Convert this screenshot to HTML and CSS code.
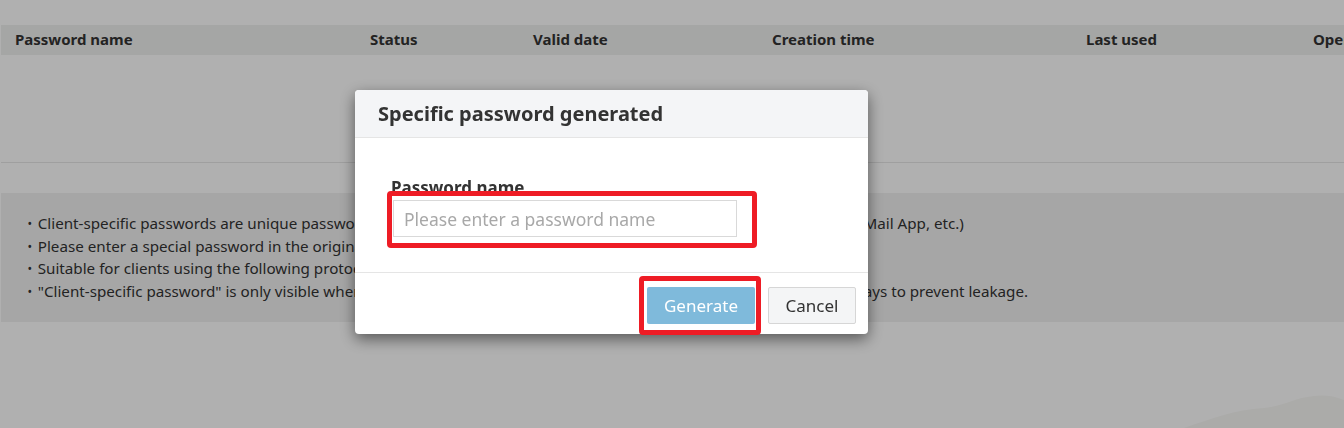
FILE: index.html
```html
<!DOCTYPE html>
<html lang="en">
<head>
  <meta charset="UTF-8" />
  <title>Client-specific password</title>
  <link rel="stylesheet" href="styles.css">
</head>
<body>
  <div class="page">
    <div class="table">
      <div class="thead">
        <div class="th">Password name</div>
        <div class="th">Status</div>
        <div class="th">Valid date</div>
        <div class="th">Creation time</div>
        <div class="th">Last used</div>
        <div class="th">Operation</div>
      </div>
      <div class="tbody"></div>
    </div>
    <ul class="tips">
      <li>Client-specific passwords are unique passwords for logging in to third-party email clients (such as Outlook, Foxmail, Mail App, etc.)</li>
      <li>Please enter a special password in the original password field when logging in to the client.</li>
      <li>Suitable for clients using the following protocols: POP3, IMAP, SMTP, Exchange.</li>
      <li>"Client-specific password" is only visible when it is generated, please copy it immediately, save it and keep it safe always to prevent leakage.</li>
    </ul>
    <svg class="hills" width="160" height="40" viewBox="0 0 160 40">
      <path d="M0 40 C30 30 50 22 80 20 C100 18 110 10 130 8 C145 6 155 10 160 12 L160 40 Z" fill="#f8f8f5"/>
    </svg>
  </div>

  <div class="mask"></div>

  <div class="modal">
    <div class="modal-header">Specific password generated</div>
    <div class="modal-body">
      <label class="field-label">Password name</label>
      <input class="field-input" type="text" placeholder="Please enter a password name" />
    </div>
    <div class="modal-footer">
      <button class="btn btn-primary">Generate</button>
      <button class="btn btn-default">Cancel</button>
    </div>
    <div class="mark mark-input"></div>
    <div class="mark mark-btn"></div>
  </div>
</body>
</html>
```

FILE: styles.css
```css
body {
  margin: 0;
  font-family: 'Noto Sans', 'Open Sans', sans-serif;
  color: #333;
  background: #fff;
  overflow: hidden;
  height: 428px;
}
.page {
  padding: 25px 0 0 1px;
}
.thead {
  display: grid;
  grid-template-columns: 355px 163px 239px 314px 227px 200px;
  background: #f0f1f0;
  height: 30px;
  align-items: center;
  padding: 0 0 2px 14px;
  box-sizing: border-box;
  white-space: nowrap;
}
.th {
  font-size: 15px;
  font-weight: bold;
  color: #333;
}
.tbody {
  height: 107px;
  border-bottom: 1px solid #e6e6e6;
}
.tips {
  list-style: none;
  margin: 30px 0 0;
  padding: 19px 0 20px 25px;
  background: #f1f1f1;
  font-size: 15.2px;
  line-height: 22.6px;
  white-space: nowrap;
}
.tips li {
  height: 22.6px;
}
.tips li::before {
  content: "•";
  display: inline-block;
  transform: scale(0.8);
  margin: 0 5px 0 1px;
}
.hills {
  position: absolute;
  right: 0;
  bottom: 0;
}
.mask {
  position: fixed;
  inset: 0;
  background: rgba(0, 0, 0, 0.31);
}
.modal {
  position: fixed;
  left: 355px;
  top: 90px;
  width: 513px;
  background: #fff;
  border-radius: 4px;
  box-shadow: 0 5px 15px rgba(0, 0, 0, 0.5);
}
.modal-header {
  background: #f4f5f7;
  border-bottom: 1px solid #e5e5e5;
  border-radius: 4px 4px 0 0;
  height: 47px;
  line-height: 47px;
  padding-left: 23px;
  font-size: 20px;
  font-weight: bold;
  color: #333;
}
.modal-body {
  padding: 39px 36px 35px 38px;
  border-bottom: 1px solid #e5e5e5;
}
.field-label {
  display: block;
  margin-left: -2px;
  font-size: 17px;
  font-weight: bold;
  line-height: 22px;
  margin-bottom: 1px;
}
.field-input {
  display: block;
  box-sizing: border-box;
  width: 344px;
  height: 37px;
  border: 1px solid #d9d9d9;
  padding: 0 10px;
  font-family: inherit;
  font-size: 17.5px;
  color: #333;
  outline: none;
}
.field-input::placeholder {
  color: #a8a8a8;
}
.modal-footer {
  display: flex;
  justify-content: flex-end;
  gap: 13px;
  padding: 14px 12px 10px;
}
.btn {
  height: 37px;
  font-family: inherit;
  font-size: 17px;
  border-radius: 2px;
  cursor: pointer;
}
.btn-primary {
  width: 108px;
  background: #7fbadb;
  color: #fff;
  border: none;
}
.btn-default {
  width: 88px;
  background: #f4f5f6;
  color: #333;
  border: 1px solid #d6d6d6;
}
.mark {
  position: absolute;
  border: 5px solid #ee1c25;
  border-radius: 4px;
  box-sizing: border-box;
}
.mark-input {
  left: 32px;
  top: 101px;
  width: 370px;
  height: 57px;
}
.mark-btn {
  left: 284px;
  top: 186px;
  width: 122px;
  height: 59px;
}
```
